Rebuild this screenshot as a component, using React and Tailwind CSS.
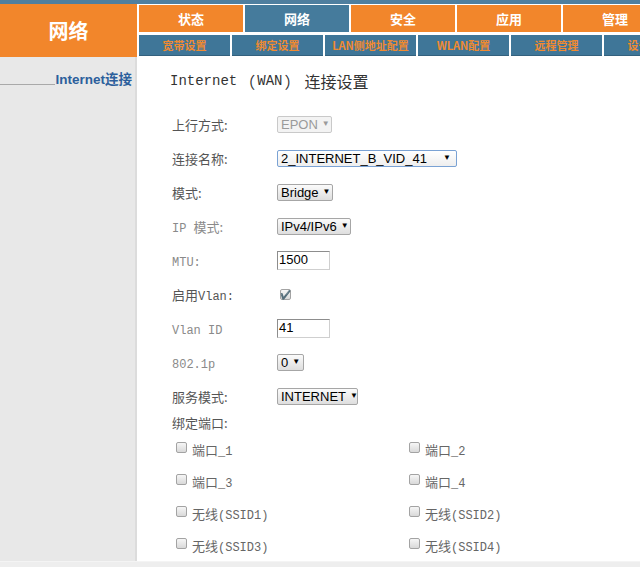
const TOP_NAV = [
  { label: '状态', active: false },
  { label: '网络', active: true },
  { label: '安全', active: false },
  { label: '应用', active: false },
  { label: '管理', active: false },
];

const SUB_NAV = ['宽带设置', '绑定设置', 'LAN侧地址配置', 'WLAN配置', '远程管理', '设备管理'];

const PORTS = [
  ['端口', '_1'],
  ['端口', '_2'],
  ['端口', '_3'],
  ['端口', '_4'],
  ['无线', '(SSID1)'],
  ['无线', '(SSID2)'],
  ['无线', '(SSID3)'],
  ['无线', '(SSID4)'],
];

const cjk = { fontFamily: '"Noto Sans CJK SC", "Liberation Sans", sans-serif' };
const mono = { fontFamily: '"Liberation Mono", "Noto Sans CJK SC", monospace' };
const arial = { fontFamily: '"Liberation Sans", Arial, sans-serif' };

function Zh({ children, className = '' }) {
  return (
    <span style={cjk} className={`text-[13px] ${className}`}>
      {children}
    </span>
  );
}

function En({ children, className = '' }) {
  return (
    <span style={mono} className={`text-[12px] ${className}`}>
      {children}
    </span>
  );
}

function Select({ value, width, disabled, focused }) {
  return (
    <div
      style={{ ...arial, width }}
      className={`h-[17px] flex items-center justify-between rounded-[2px] border pl-[3px] pr-[5px] text-[13px] leading-none ${
        disabled
          ? 'border-[#c9c9c9] bg-[#f3f3f3] text-[#9a9a9a]'
          : focused
          ? 'border-[#7aa2d4] bg-gradient-to-b from-white to-[#eeeeee] text-black'
          : 'border-[#a6a6a6] bg-gradient-to-b from-[#fbfbfb] to-[#dedede] text-black'
      }`}
    >
      <span>{value}</span>
      <span className="text-[8px] ml-[4px]">▼</span>
    </div>
  );
}

function TextInput({ value }) {
  return (
    <div
      style={arial}
      className="w-[53px] h-[19px] flex items-center border border-t-[#8d8d8d] border-l-[#8d8d8d] border-r-[#cfcfcf] border-b-[#cfcfcf] bg-white pl-[1px] text-[13px] text-black"
    >
      {value}
    </div>
  );
}

function Box({ checked }) {
  return (
    <span className="w-[11px] h-[11px] flex items-center justify-center rounded-[2px] border border-[#a3a3a3] bg-gradient-to-b from-[#f6f6f6] to-[#d9d9d9] text-[9px] leading-none text-[#333]">
      {checked ? '✔' : ''}
    </span>
  );
}

function Row({ label, dim, children }) {
  return (
    <div className="h-[34px] flex items-center">
      <div className={`w-[105px] ${dim ? 'text-[#8a8a8a]' : 'text-[#555]'}`}>{label}</div>
      {children}
    </div>
  );
}

export default function App() {
  return (
    <div className="w-[640px] h-[567px] overflow-hidden bg-white flex flex-col">
      <div className="h-[4px] bg-[#4f7f9f]" />

      <div className="flex h-[54px]">
        <div
          style={cjk}
          className="w-[137px] bg-[#f2862b] flex items-center justify-center text-white text-[20px] font-bold"
        >
          网络
        </div>
        <div className="flex-1 bg-white pl-[2px] pt-[1px] flex flex-col gap-[3px] overflow-hidden">
          <div className="flex gap-[2px] h-[27px]">
            {TOP_NAV.map((item) => (
              <div
                key={item.label}
                style={cjk}
                className={`w-[104px] shrink-0 flex items-center justify-center text-white text-[13px] font-bold ${
                  item.active ? 'bg-[#457b9c]' : 'bg-[#f2862b]'
                }`}
              >
                {item.label}
              </div>
            ))}
          </div>
          <div className="flex gap-[2px] h-[21px]">
            {SUB_NAV.map((item) => (
              <div
                key={item}
                style={cjk}
                className="w-[91px] shrink-0 flex items-center justify-center bg-[#3f7698] border-b border-[#33617e] text-[#f08a30] text-[11px] font-bold"
              >
                {item}
              </div>
            ))}
          </div>
        </div>
      </div>

      <div className="flex flex-1">
        <div className="w-[137px] bg-[#e8e8e8] border-r-2 border-[#dcdcdc] pr-[3px] pt-[12px]">
          <div className="flex items-end">
            <div className="flex-1 border-b border-[#a9a9a9] mb-[4px]" />
            <span style={arial} className="text-[13.5px] font-bold text-[#2c5f9c] leading-[18px]">
              Internet<span style={cjk}>连接</span>
            </span>
          </div>
        </div>

        <div className="flex-1 pl-[35px] pt-[15px]">
          <div className="h-[18px] flex items-center text-[#333] ml-[-2px]">
            <span style={mono} className="text-[14px]">Internet</span>
            <span style={cjk} className="text-[16px] ml-[2px]">（</span>
            <span style={mono} className="text-[14px] pl-[2px] pr-[2px]">WAN</span>
            <span style={cjk} className="text-[16px]">）</span>
            <span style={cjk} className="text-[16px] ml-[4px]">连接设置</span>
          </div>

          <div className="mt-[17px] flex flex-col">
            <Row label={<Zh>上行方式:</Zh>}>
              <Select value="EPON" width={55} disabled />
            </Row>
            <Row label={<Zh>连接名称:</Zh>}>
              <Select value="2_INTERNET_B_VID_41" width={180} focused />
            </Row>
            <Row label={<Zh>模式:</Zh>}>
              <Select value="Bridge" width={56} />
            </Row>
            <Row label={<><En>IP </En><Zh>模式:</Zh></>} dim>
              <Select value="IPv4/IPv6" width={74} />
            </Row>
            <Row label={<En>MTU:</En>} dim>
              <TextInput value="1500" />
            </Row>
            <Row label={<><Zh>启用</Zh><En>Vlan:</En></>}>
              <span className="ml-[3px]">
                <Box checked />
              </span>
            </Row>
            <Row label={<En>Vlan ID</En>} dim>
              <TextInput value="41" />
            </Row>
            <Row label={<En>802.1p</En>} dim>
              <Select value="0" width={27} />
            </Row>
            <Row label={<Zh>服务模式:</Zh>}>
              <Select value="INTERNET" width={81} />
            </Row>
            <div className="h-[20px] flex items-center text-[#555]">
              <Zh>绑定端口:</Zh>
            </div>
            <div className="grid grid-cols-[233px_1fr] pl-[4px]">
              {PORTS.map(([zh, en]) => (
                <div key={zh + en} className="h-[32px] flex items-center gap-[5px] text-[#666]">
                  <span className="mt-[-4px]">
                    <Box />
                  </span>
                  <span>
                    <Zh>{zh}</Zh>
                    <En>{en}</En>
                  </span>
                </div>
              ))}
            </div>
          </div>
        </div>
      </div>

      <div className="h-[6px] bg-[#eeeeee] border-t border-[#f4f4f4]" />
    </div>
  );
}
